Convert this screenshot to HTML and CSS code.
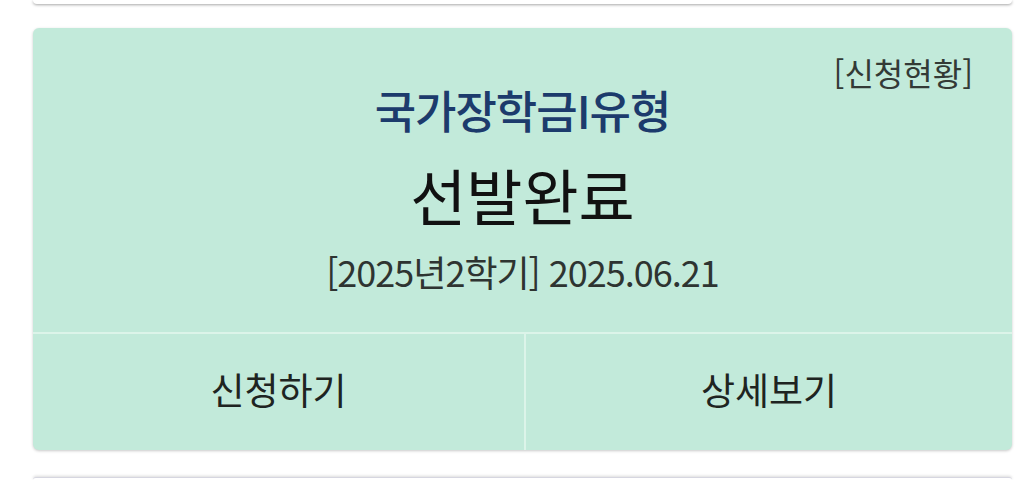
FILE: index.html
```html
<!DOCTYPE html>
<html lang="ko">
<head>
<meta charset="utf-8">
<link rel="stylesheet" href="styles.css">
</head>
<body>
<div class="page">
  <div class="card-prev"></div>
  <section class="card">
    <div class="card-body">
      <a class="status-link">[신청현황]</a>
      <h2 class="title">국가장학금I유형</h2>
      <p class="result">선발완료</p>
      <p class="date">[2025년2학기] 2025.06.21</p>
    </div>
    <div class="actions">
      <button class="action">신청하기</button>
      <button class="action">상세보기</button>
    </div>
  </section>
  <div class="card-next"></div>
</div>
</body>
</html>
```
FILE: styles.css
```css
html, body {
  margin: 0;
  padding: 0;
  background: #ffffff;
  height: 480px;
  overflow: hidden;
}
body {
  font-family: "Noto Sans CJK KR", "Noto Sans", sans-serif;
}
.page {
  width: 979px;
  padding-left: 33px;
  display: flex;
  flex-direction: column;
  gap: 24px;
}
.card-prev {
  height: 4px;
  background: #ffffff;
  border-radius: 0 0 6px 6px;
  box-shadow: 0 1px 3px rgba(0,0,0,0.35);
}
.card {
  background: #c2eada;
  border-radius: 6px;
  box-shadow: 0 1px 3px rgba(0,0,0,0.22);
  overflow: hidden;
}
.card-body {
  position: relative;
  display: flex;
  flex-direction: column;
  align-items: center;
  padding: 55px 0 41px;
}
.status-link {
  position: absolute;
  top: 24px;
  right: 39px;
  font-size: 32px;
  line-height: 40px;
  color: #333a36;
}
.title {
  margin: 0;
  font-size: 45px;
  line-height: 54px;
  font-weight: 500;
  color: #1c3b6c;
  letter-spacing: -1px;
}
.result {
  margin: 23px 0 0;
  font-size: 61px;
  line-height: 70px;
  font-weight: 400;
  color: #111111;
}
.date {
  margin: 21px 0 0;
  font-size: 36px;
  line-height: 40px;
  color: #2e3431;
  letter-spacing: -1px;
}
.actions {
  display: grid;
  grid-template-columns: 491px 1fr;
  border-top: 2px solid #dcf4e9;
}
.action {
  height: 116px;
  border: 0;
  background: transparent;
  font-family: inherit;
  font-size: 37px;
  color: #1e2421;
  padding: 0 0 6px;
}
.action + .action {
  border-left: 2px solid #dcf4e9;
}
.card-next {
  height: 2px;
  margin-top: 3px;
  background: #ffffff;
  border-radius: 6px 6px 0 0;
  box-shadow: 0 -1px 3px rgba(0,0,0,0.15);
  border-top: 1px solid #d6d6e0;
}
```
